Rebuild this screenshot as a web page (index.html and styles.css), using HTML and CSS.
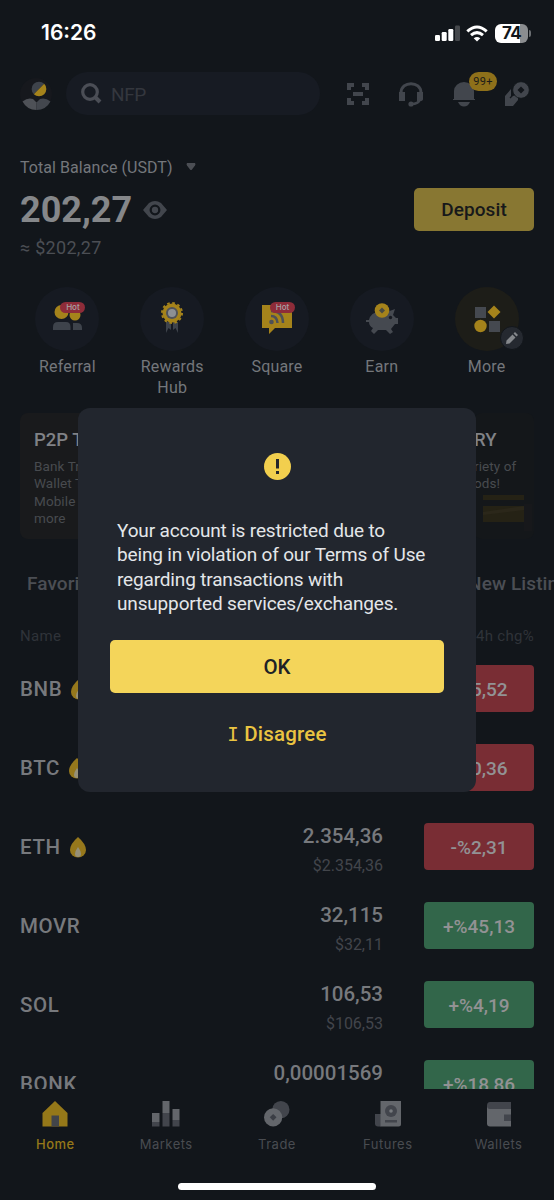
FILE: index.html
```html
<!DOCTYPE html>
<html lang="en">
<head>
<meta charset="utf-8">
<title>Wallet</title>
<link rel="stylesheet" href="styles.css">
</head>
<body>
<div class="screen">
  <header class="status">
    <span class="clock">16:26</span>
    <div class="signals">
      <svg width="25" height="17" viewBox="0 0 25 17"><rect y="10" width="5" height="6" rx="1.2" fill="#fff"/><rect x="6.7" y="7" width="5" height="9" rx="1.2" fill="#fff"/><rect x="13.3" y="4" width="5" height="12" rx="1.2" fill="#fff"/><rect x="20" y="0.5" width="5" height="15.500" rx="1.2" fill="#45484c"/></svg>
      <svg class="wifi" width="22" height="17" viewBox="0 0 22 17" fill="none" stroke="#fff" stroke-width="3"><path d="M1.300 6.300Q11-2.300 20.700 6.300"/><path d="M5 10.200Q11 5 17 10.200"/><path d="M11 16.500L7.700 13.200Q11 10.600 14.300 13.200Z" fill="#fff" stroke="none"/></svg>
      <span class="battery">74</span><i class="cap"></i>
    </div>
  </header>

  <div class="topbar">
    <svg class="avatar" width="32" height="32" viewBox="0 0 32 32"><circle cx="16" cy="16" r="16" fill="#16181d"/><path d="M13.800 16.200A7.300 7.300 0 0 1 24.200 5.800Z" fill="#3e434b"/><path d="M24.200 5.800A7.300 7.300 0 0 1 13.800 16.200Z" fill="#a5831b"/><path d="M2.500 23.500Q8 19 13 21L16.500 24.500V32Q7 32 2.500 23.500" fill="#4e5157"/><path d="M30.500 23.500Q25 19 20 21L16.500 24.500V32Q26 32 30.500 23.500" fill="#43474e"/></svg>
    <div class="search">
      <svg width="21" height="21" viewBox="0 0 21 21" fill="none" stroke="#4b4e56" stroke-width="3.200"><circle cx="9" cy="9" r="7.300"/><path d="M14 14L19 19" stroke-width="4"/></svg>
      <span>NFP</span>
    </div>
    <div class="tools">
      <svg width="24" height="24" viewBox="0 0 24 24" fill="none" stroke="#42464d" stroke-width="4"><path d="M3 8V3H8M16 3H21V8M21 16V21H16M8 21H3V16M7 12H17"/></svg>
      <svg width="26" height="26" viewBox="0 0 26 26"><path d="M3 17V12C3-.5 23-.5 23 12V17" fill="none" stroke="#42464d" stroke-width="3"/><path d="M1 11H7V20H1ZM19 11H25V18Q25 20 22 20H19Z" fill="#42464d"/><path d="M22 18Q21 23 13 23" fill="none" stroke="#42464d" stroke-width="2.500"/><circle cx="13" cy="23" r="2.600" fill="#42464d"/></svg>
      <div class="bell"><svg width="24" height="26" viewBox="0 0 24 26" fill="#42464d"><path d="M2 18V10A10 9 0 0 1 22 10V18H23V19H1V18ZM6 21H18Q16 25.500 12 25.500Q8 25.500 6 21"/></svg><b class="count">99+</b></div>
      <svg width="26" height="26" viewBox="0 0 26 26"><path d="M1 25V15L7 8V15L14 14V19L9 25Z" fill="#42464d"/><circle cx="17" cy="9" r="8.300" fill="#42464d" stroke="#12161b" stroke-width=".8"/><path d="M17 5.500L20.500 9L17 12.500L13.500 9Z" fill="#12161b"/><path d="M6 17L10 13" stroke="#12161b" stroke-width="1.200"/></svg>
    </div>
  </div>

  <section class="balance">
    <div>
      <div class="caption"><span>Total Balance (USDT)</span><svg width="10" height="8" viewBox="0 0 10 8"><path d="M1 0H9Q10 1 9 2.500L6 6.500Q5 7.500 4 6.500L1 2.500Q0 1 1 0" fill="#4b4e54"/></svg></div>
      <div class="amount"><span>202,27</span><svg width="24" height="18" viewBox="0 0 24 18"><path d="M0 9L6 2Q12-2 18 2L24 9L18 16Q12 20 6 16Z" fill="#42464d"/><circle cx="12" cy="9" r="4.300" fill="#42464d" stroke="#12161b" stroke-width="2.300"/></svg></div>
      <div class="approx">≈ $202,27</div>
    </div>
    <button class="deposit">Deposit</button>
  </section>

  <nav class="shortcuts">
    <div class="shortcut"><div class="disc"><svg width="32" height="34" viewBox="0 0 32 34"><circle cx="10.500" cy="10" r="7" fill="#a5831b"/><circle cx="24" cy="13" r="5.500" fill="#a5831b"/><path d="M2 28V25Q2 20 7 20H15Q19.500 20 19.500 25V28ZM22 28V21H26Q31 21 31 26V28Z" fill="#3e434b"/></svg><b class="hot">Hot</b></div><span>Referral</span></div>
    <div class="shortcut"><div class="disc"><svg width="24" height="34" viewBox="0 0 24 34"><path d="M6 20H11V28L8.500 26L6 31ZM13 20H18V31L15.500 26L13 28Z" fill="#3e434b"/><circle cx="12" cy="11" r="9.500" fill="#a5831b"/><circle cx="12" cy="11" r="10" fill="none" stroke="#a5831b" stroke-width="2" stroke-dasharray="2.618 2.618"/><circle cx="12" cy="11" r="6" fill="#50535a"/><circle cx="12" cy="11" r="4" fill="#8d9094"/></svg></div><span>Rewards<br>Hub</span></div>
    <div class="shortcut"><div class="disc"><svg width="32" height="34" viewBox="0 0 32 34"><path d="M1 3H31V26H14L8 32V26H1Z" fill="#a5831b"/><circle cx="10.500" cy="20" r="2.300" fill="#4e5157"/><path d="M10 14Q16 14 16.500 21M10 9Q22 9 22 21" fill="none" stroke="#4e5157" stroke-width="2.500"/></svg><b class="hot">Hot</b></div><span>Square</span></div>
    <div class="shortcut"><div class="disc"><svg width="34" height="34" viewBox="0 0 34 34"><path d="M1 18H4Q6 10 14 10H22L30 7L28 13L31 16H33V22H30L26 27L28 30L25 32L21 28H13L9 32L6 29L8 26Q4 24 4 20H1Z" fill="#454950"/><circle cx="25.500" cy="15.500" r="1.700" fill="#171a21"/><circle cx="17" cy="8.500" r="7.300" fill="#a5831b"/><path d="M17 5.500L20 8.500L17 11.500L14 8.500Z" fill="#4a4b42"/></svg></div><span>Earn</span></div>
    <div class="shortcut"><div class="disc olive"><svg width="28" height="28" viewBox="0 0 28 28"><path d="M2 2H13V13H2ZM16 16H27V27H16Z" fill="#454950"/><path d="M21 .5L27.500 7L21 13.500L14.500 7Z" fill="#a5831b"/><circle cx="7.500" cy="21" r="6.200" fill="#a5831b"/></svg><i class="edit"><svg width="12" height="12" viewBox="0 0 12 12"><path d="M0 12L.5 8.500L6.500 2.500L9.500 5.500L3.500 11.500ZM7.500 1.500L9 0L12 3L10.500 4.500Z" fill="#85888c"/></svg></i></div><span>More</span></div>
  </nav>

  <section class="promos">
    <article class="promo"><h3>P2P Trading</h3><p>Bank Transfer,<br>Wallet Transfer,<br>Mobile and<br>more</p></article>
    <article class="promo faint"><h3>RY</h3><p>riety of<br>ods!</p><svg width="56" height="38" viewBox="0 0 56 38"><path d="M6 1H47V6H6ZM6 12H47V28H6Z" fill="#252215"/><path d="M6 18L47 12V16L6 21" fill="#2b271a"/><path d="M47 10H55V37H47Z" fill="#17181b"/></svg></article>
  </section>

  <div class="tabs"><span>Favorites</span><span class="new">New Listing</span></div>
  <div class="columns"><span>Name</span><span>24h chg%</span></div>

  <main class="market">
    <div class="coin"><div class="name">BNB<svg class="flame" width="18" height="22" viewBox="0 0 18 22"><path d="M9 1Q17 8 17 14A8 7.500 0 0 1 1 14Q1 8 9 1" fill="#96781c"/><path d="M9 11Q12 15 12 18A3 3 0 0 1 6 18Q6 15 9 11" fill="#969078"/></svg></div><div class="quote"></div><div class="change red">-%5,52</div></div>
    <div class="coin"><div class="name">BTC<svg class="flame" width="18" height="22" viewBox="0 0 18 22"><path d="M9 1Q17 8 17 14A8 7.500 0 0 1 1 14Q1 8 9 1" fill="#96781c"/><path d="M9 11Q12 15 12 18A3 3 0 0 1 6 18Q6 15 9 11" fill="#969078"/></svg></div><div class="quote"></div><div class="change red">-%0,36</div></div>
    <div class="coin"><div class="name">ETH<svg class="flame" width="18" height="22" viewBox="0 0 18 22"><path d="M9 1Q17 8 17 14A8 7.500 0 0 1 1 14Q1 8 9 1" fill="#96781c"/><path d="M9 11Q12 15 12 18A3 3 0 0 1 6 18Q6 15 9 11" fill="#969078"/></svg></div><div class="quote"><b>2.354,36</b><small>$2.354,36</small></div><div class="change red">-%2,31</div></div>
    <div class="coin"><div class="name">MOVR</div><div class="quote"><b>32,115</b><small>$32,11</small></div><div class="change green">+%45,13</div></div>
    <div class="coin"><div class="name">SOL</div><div class="quote"><b>106,53</b><small>$106,53</small></div><div class="change green">+%4,19</div></div>
    <div class="coin"><div class="name">BONK</div><div class="quote"><b>0,00001569</b><small></small></div><div class="change green">+%18,86</div></div>
  </main>

  <footer class="dock">
    <div class="dock-items">
      <div class="item active"><svg width="28" height="26" viewBox="0 0 28 26"><path d="M14 0L26.500 12V25.500H1.500V12Z" fill="#957819"/><path d="M10.500 14.500H18V25.500H10.500Z" fill="#42454a"/></svg><span>Home</span></div>
      <div class="item"><svg width="28" height="26" viewBox="0 0 28 26"><path d="M0 12H7.500V21H0ZM10.500 0H17.500V12H10.500ZM20.500 8H27.500V19H20.500Z" fill="#63666b"/><path d="M0 21H7.500V25.500H0ZM10.500 12H17.500V25.500H10.500ZM20.500 19H27.500V25.500H20.500Z" fill="#42454c"/></svg><span>Markets</span></div>
      <div class="item"><svg width="28" height="27" viewBox="0 0 28 27"><circle cx="18" cy="9" r="9" fill="#42454c"/><circle cx="10" cy="17" r="9.500" fill="#63666b"/><path d="M10 13.500L13.500 17L10 20.500L6.500 17Z" fill="#3b3e45"/></svg><span>Trade</span></div>
      <div class="item"><svg width="28" height="26" viewBox="0 0 28 26"><path d="M1 13H7V25.500H4Q1 25.500 1 22.500Z" fill="#42454c"/><path d="M6.500 0H27V23Q27 25.500 24.500 25.500H6.500Z" fill="#63666b"/><circle cx="17" cy="10" r="6" fill="#42454c"/><circle cx="17" cy="10" r="1.800" fill="#777a7e"/><path d="M11 19H23V21.500H11Z" fill="#42454c"/></svg><span>Futures</span></div>
      <div class="item"><svg width="26" height="26" viewBox="0 0 26 26"><path d="M1 4H25V25.500H4Q1 25.500 1 22.500Z" fill="#63666b"/><path d="M4 1H25V8H4Q1 8 1 4.500Q1 1 4 1M18 13.500H25V20H18Z" fill="#42454c"/></svg><span>Wallets</span></div>
    </div>
    <div class="handle"></div>
  </footer>

  <div class="dialog" role="dialog">
    <svg class="alert" width="27" height="27" viewBox="0 0 27 27"><circle cx="13.500" cy="13.500" r="13.500" fill="#f2cf4e"/><path d="M12 6H15V15.500H12ZM12 18H15V21H12Z" fill="#25262b"/></svg>
    <p>Your account is restricted due to<br>being in violation of our Terms of Use<br>regarding transactions with<br>unsupported services/exchanges.</p>
    <button class="ok">OK</button>
    <button class="disagree"><i class="serif-i">I</i> Disagree</button>
  </div>
</div>
</body>
</html>
```
FILE: styles.css
```css
* { box-sizing: border-box; }
body { margin: 0; background: #12161b; }
button { border: 0; padding: 0; font-family: inherit; }
svg { display: block; flex: none; }

.screen {
  position: relative;
  display: flex;
  flex-direction: column;
  width: 554px;
  height: 1200px;
  overflow: hidden;
  background: #12161b;
  color: #85878a;
  font-family: Roboto, "Noto Sans", sans-serif;
}

.status { height: 72px; flex: none; display: flex; justify-content: space-between; padding: 20px 23px 0 41px; }
.clock { color: #fff; font: 600 21px/26px Inter, sans-serif; letter-spacing: 0; }
.signals { display: flex; height: 26px; align-items: center; }
.wifi { margin-left: 6px; }
.battery { margin-left: 7px; width: 33px; height: 19px; border-radius: 6px; background: linear-gradient(90deg, #fff 75%, #8b8d90 75%); color: #12161b; font: 700 17px/19px Inter, sans-serif; text-align: center; letter-spacing: -.6px; }
.cap { width: 2px; height: 7px; margin-left: 1px; border-radius: 0 3px 3px 0; background: #6b6e72; }

.topbar { height: 43px; flex: none; display: flex; align-items: center; padding-left: 20px; }
.search { width: 254px; height: 43px; margin-left: 14px; padding-left: 15px; border-radius: 22px; background: #171b23; display: flex; align-items: center; gap: 9px; color: #34373e; font-size: 19px; letter-spacing: -.4px; }
.search span { padding-top: 2px; }
.tools { display: flex; align-items: center; margin-left: 26px; gap: 28px; }
.bell { position: relative; }
.count { position: absolute; left: 17px; top: -9px; width: 28px; height: 19px; border-radius: 10px; background: #8e701a; color: #1b1b18; font-size: 11px; font-weight: 400; line-height: 20px; text-align: center; letter-spacing: .3px; }

.balance { height: 172px; flex: none; display: flex; justify-content: space-between; padding: 40px 20px 0 20px; }
.caption { height: 24px; display: flex; align-items: center; gap: 13px; font-size: 16px; letter-spacing: .06px; color: #74777b; }
.amount { height: 62px; display: flex; align-items: center; gap: 11px; font-size: 36px; font-weight: 700; }
.approx { margin-top: -5px; line-height: 24px; font-size: 18px; letter-spacing: .3px; color: #4b4e54; }
.deposit { width: 120px; height: 43px; margin-top: 33px; border-radius: 5px; background: #887732; color: #17181a; font-size: 19px; font-weight: 500; letter-spacing: .1px; }

.shortcuts { height: 126px; flex: none; display: flex; padding-left: 15px; }
.shortcut { width: 104.800px; text-align: center; font-size: 16px; line-height: 20.500px; letter-spacing: .2px; color: #74777b; }
.disc { position: relative; width: 64px; height: 64px; margin: 0 auto 6px; border-radius: 50%; background: #161a22; display: flex; align-items: center; justify-content: center; }
.olive { background: #1d1d18; }
.hot { position: absolute; left: 25px; top: 15px; width: 25px; height: 11px; border-radius: 6px; background: #8e2c39; color: #a6a2a5; font: 500 8px/11px Inter, sans-serif; letter-spacing: 0; }
.edit { position: absolute; left: 45px; top: 39px; width: 24px; height: 24px; border: 1px solid #12161b; border-radius: 50%; background: #252930; display: flex; align-items: center; justify-content: center; }

.promos { height: 126px; flex: none; display: flex; justify-content: space-between; padding: 0 20px; }
.promo { width: 252px; border-radius: 8px; background: #191a1c; padding: 16px 14px; }
.promo h3 { margin: 0; font-size: 18.500px; line-height: 22px; font-weight: 500; letter-spacing: 0; color: #808286; }
.promo p { margin: 7px 0 0; font-size: 13.500px; line-height: 17.300px; letter-spacing: .1px; color: #484b4f; white-space: nowrap; }
.faint { width: 60px; padding: 16px 0; background: #14171a; }
.faint svg { margin: 1px 0 0 3px; }

.tabs { height: 84px; flex: none; display: flex; align-items: center; padding: 4px 0 0 27px; font-size: 19px; font-weight: 500; letter-spacing: .1px; color: #4b4e54; white-space: nowrap; }
.new { margin-left: 362px; }
.columns { height: 26px; flex: none; display: flex; justify-content: space-between; padding: 0 20px; font-size: 15px; line-height: 26px; letter-spacing: .3px; color: #2f3339; }

.market { height: 440px; flex: none; overflow: hidden; }
.coin { height: 79px; padding: 16px 20px; display: flex; align-items: center; }
.name { width: 180px; padding-top: 1px; display: flex; align-items: center; gap: 8px; font-size: 20.500px; font-weight: 500; letter-spacing: .6px; color: #77797d; }
.quote { width: 183px; padding-top: 6px; display: flex; flex-direction: column; align-items: flex-end; }
.quote b { height: 28px; font-size: 20.500px; line-height: 24px; font-weight: 500; color: #77797d; }
.quote small { height: 24px; font-size: 16px; line-height: 28px; color: #42454b; }
.change { width: 110px; height: 47px; margin-left: auto; border-radius: 4px; color: #929294; font-size: 19px; line-height: 49px; font-weight: 500; text-align: center; letter-spacing: 0; }
.red { background: #792d34; }
.green { background: #32664a; }

.dock { height: 111px; flex: none; padding-top: 12px; }
.dock-items { display: flex; height: 82px; }
.item { flex: 1; display: flex; flex-direction: column; align-items: center; font: 400 13px/18px Inter, sans-serif; letter-spacing: .5px; color: #494c51; }
.item svg { height: 26px; margin-bottom: 8px; }
.active { color: #957819; font-weight: 500; }
.handle { width: 198px; height: 7px; margin: 0 auto; border-radius: 4px; background: #fff; }

.dialog { position: absolute; left: 78px; top: 408px; width: 398px; height: 384px; padding: 45px 32px 0; border-radius: 12px; background: #22262e; color: #e4e6e9; }
.alert { margin: 0 auto; }
.dialog p { height: 98px; margin: 39px 0 23px 7px; font-size: 19px; line-height: 24.400px; letter-spacing: -.16px; white-space: nowrap; }
.ok, .disagree { display: block; width: 334px; height: 53px; border-radius: 5px; background: #f4d55a; color: #202226; font-size: 20.500px; font-weight: 500; }
.disagree { margin-top: 14px; background: none; color: #eac441; letter-spacing: .2px; }
.serif-i { font-family: "DejaVu Sans Mono", monospace; font-style: normal; font-weight: 400; font-size: 19px; }
```
